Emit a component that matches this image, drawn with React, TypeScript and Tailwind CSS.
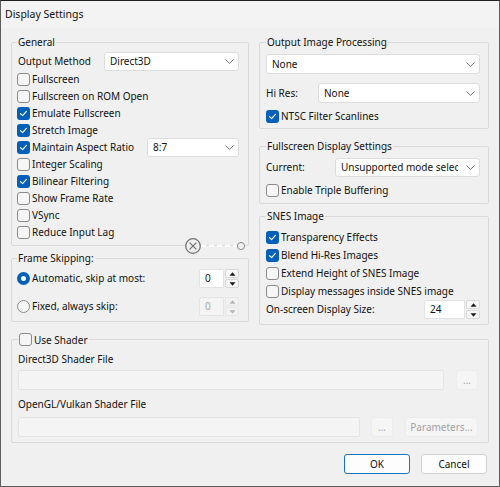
import clsx from 'clsx'
import type { ReactNode } from 'react'

function Box({ checked }: { checked?: boolean }) {
  if (checked)
    return (
      <span className="w-[13px] h-[13px] shrink-0 rounded-[3px] bg-[#005fb8] flex items-center justify-center">
        <svg width="9" height="9" viewBox="0 0 9 9" fill="none">
          <path d="M1.6 4.7 L3.6 6.6 L7.4 2.4" stroke="white" strokeWidth="1.2" strokeLinecap="round" strokeLinejoin="round" />
        </svg>
      </span>
    )
  return <span className="w-[13px] h-[13px] shrink-0 rounded-[3px] border border-[#8a8a8a] bg-[#f6f6f6]" />
}

function Check({ label, checked, className }: { label: string; checked?: boolean; className?: string }) {
  return (
    <div className={clsx('flex items-center gap-[2px]', className ?? 'h-[17px]')}>
      <Box checked={checked} />
      <span className="whitespace-nowrap">{label}</span>
    </div>
  )
}

function Radio({ on, label }: { on?: boolean; label: string }) {
  return (
    <div className="flex items-center gap-[2px]">
      {on ? (
        <span className="w-[13px] h-[13px] rounded-full bg-[#005fb8] flex items-center justify-center">
          <span className="w-[5px] h-[5px] rounded-full bg-white" />
        </span>
      ) : (
        <span className="w-[13px] h-[13px] rounded-full border border-[#8a8a8a] bg-[#f6f6f6]" />
      )}
      <span>{label}</span>
    </div>
  )
}

function Chevron() {
  return (
    <svg width="9" height="5" viewBox="0 0 9 5" fill="none" className="shrink-0">
      <path d="M0.5 0.5 L4.5 4.3 L8.5 0.5" stroke="#6e6e6e" strokeWidth="1" />
    </svg>
  )
}

function Combo({ value, className }: { value: string; className?: string }) {
  return (
    <div className={clsx('h-[19px] flex items-center bg-white border border-[#dcdcdc] rounded-[3px] pl-[5px] pr-[4px]', className)}>
      <span className="flex-1 mr-[8px] overflow-hidden whitespace-nowrap">{value}</span>
      <Chevron />
    </div>
  )
}

function Tri({ up, disabled }: { up?: boolean; disabled?: boolean }) {
  return (
    <span className={clsx('flex-1 flex items-center justify-center rounded-[2px] border', disabled ? 'bg-[#f3f3f3] border-[#e6e6e6]' : 'bg-[#f7f7f7] border-[#d8d8d8]')}>
      <svg width="7" height="4" viewBox="0 0 7 4">
        <path d={up ? 'M0.5 3.8 L3.5 0.3 L6.5 3.8 Z' : 'M0.5 0.2 L3.5 3.7 L6.5 0.2 Z'} fill={disabled ? '#b5b5b5' : '#1a1a1a'} />
      </svg>
    </span>
  )
}

function Spin({ value, disabled, className }: { value: string; disabled?: boolean; className?: string }) {
  return (
    <div className={clsx('h-[19px] flex', className)}>
      <div className={clsx('flex-1 flex items-center pl-[5px] border rounded-l-[2px]', disabled ? 'bg-[#f4f4f4] border-[#e4e4e4] text-[#a6a6a6]' : 'bg-white border-[#e2e2e2]')}>
        {value}
      </div>
      <div className="w-[15px] flex flex-col gap-[1px] pl-[1px]">
        <Tri up disabled={disabled} />
        <Tri disabled={disabled} />
      </div>
    </div>
  )
}

function Group({ title, children, className }: { title: ReactNode; children: ReactNode; className?: string }) {
  return (
    <fieldset className={clsx('relative border border-[#d9d9d9] rounded-[2px]', className)}>
      <legend className="px-[1px] leading-[16px]">{title}</legend>
      {children}
    </fieldset>
  )
}

function Btn({ children, className }: { children: ReactNode; className?: string }) {
  return (
    <div className={clsx('h-[20px] flex items-center justify-center rounded-[3px] border border-[#ececec] bg-[#f5f5f5] text-[#a3a3a3]', className)}>
      {children}
    </div>
  )
}

export default function App() {
  return (
    <div className="w-[500px] h-[487px] bg-[#f0f0f0] border border-[#5c5c5c] border-t-[#1f1f1f] flex flex-col text-[10px] text-[#111] font-['Noto_Sans',sans-serif]">
      <div className="h-[27px] pl-[4px] flex items-center text-[10.5px] bg-[#f3f3f3]">Display Settings</div>

      <div className="px-[10px] flex flex-col">
        <div className="flex gap-[10px] mt-[6px]">
          {/* left column */}
          <div className="w-[238px] flex flex-col gap-[4px]">
            <Group title="General" className="pl-[5px] pr-[9px] pt-[2px] pb-[4px]">
              <div className="h-[19px] flex items-center">
                <span className="pl-[1px]">Output Method</span>
                <Combo value="Direct3D" className="ml-auto w-[135px]" />
              </div>
              <Check label="Fullscreen" />
              <Check label="Fullscreen on ROM Open" />
              <Check label="Emulate Fullscreen" checked />
              <Check label="Stretch Image" checked />
              <div className="h-[17px] flex items-center">
                <Check label="Maintain Aspect Ratio" checked />
                <Combo value="8:7" className="ml-auto w-[92px]" />
              </div>
              <Check label="Integer Scaling" />
              <Check label="Bilinear Filtering" checked />
              <Check label="Show Frame Rate" />
              <Check label="VSync" />
              <Check label="Reduce Input Lag" />
              <svg width="64" height="18" viewBox="0 0 64 18" fill="none" className="absolute left-[172px] bottom-[-10px]">
                <circle cx="9" cy="9" r="7.3" stroke="#737373" strokeWidth="1.3" fill="#f0f0f0" />
                <path d="M5.6 5.6 L12.4 12.4 M12.4 5.6 L5.6 12.4" stroke="#737373" strokeWidth="1.3" />
                <path d="M17 9 L53 9" stroke="#ffffff" strokeWidth="2" strokeDasharray="5 3" />
                <circle cx="57" cy="9" r="3.6" stroke="#8a8a8a" strokeWidth="1" fill="#f0f0f0" />
              </svg>
            </Group>

            <Group title="Frame Skipping:" className="pl-[5px] pr-[9px] pt-[3px] pb-[5px]">
              <div className="h-[19px] flex items-center justify-between">
                <Radio on label="Automatic, skip at most:" />
                <Spin value="0" className="w-[40px]" />
              </div>
              <div className="h-[19px] mt-[9px] flex items-center justify-between">
                <Radio label="Fixed, always skip:" />
                <Spin value="0" disabled className="w-[40px]" />
              </div>
            </Group>
          </div>

          {/* right column */}
          <div className="w-[230px] flex flex-col">
            <Group title="Output Image Processing" className="pl-[6px] pr-[8px] pt-[4px] pb-[3px]">
              <Combo value="None" className="h-[20px]" />
              <div className="h-[20px] mt-[9px] flex items-center">
                <span>Hi Res:</span>
                <Combo value="None" className="ml-auto w-[162px] h-[20px]" />
              </div>
              <Check label="NTSC Filter Scanlines" checked className="h-[17px] mt-[5px]" />
            </Group>

            <Group title="Fullscreen Display Settings" className="mt-[9px] pl-[6px] pr-[8px] pt-[4px] pb-[4px]">
              <div className="h-[19px] flex items-center">
                <span>Current:</span>
                <Combo value="Unsupported mode selected" className="ml-auto w-[145px]" />
              </div>
              <Check label="Enable Triple Buffering" className="h-[17px] mt-[5px]" />
            </Group>

            <Group title="SNES Image" className="mt-[4px] pl-[6px] pr-[8px] pt-[4px] pb-[5px]">
              <Check label="Transparency Effects" checked className="h-[18px]" />
              <Check label="Blend Hi-Res Images" checked className="h-[18px]" />
              <Check label="Extend Height of SNES Image" className="h-[18px]" />
              <Check label="Display messages inside SNES image" className="h-[18px]" />
              <div className="h-[19px] flex items-center">
                <span>On-screen Display Size:</span>
                <Spin value="24" className="ml-auto w-[56px]" />
              </div>
            </Group>
          </div>
        </div>

        <Group title={<Check label="Use Shader" />} className="mt-[6px] pl-[6px] pr-[10px] pt-[3px] pb-[5px]">
          <div className="h-[16px] flex items-center">Direct3D Shader File</div>
          <div className="mt-[3px] flex items-center">
            <div className="flex-1 h-[20px] rounded-[2px] border border-[#e4e4e4] bg-[#f4f4f4]" />
            <Btn className="w-[22px] ml-[12px]">...</Btn>
          </div>
          <div className="h-[16px] mt-[6px] flex items-center">OpenGL/Vulkan Shader File</div>
          <div className="mt-[5px] flex items-center">
            <div className="flex-1 h-[20px] rounded-[2px] border border-[#e4e4e4] bg-[#f4f4f4]" />
            <Btn className="w-[22px] ml-[11px]">...</Btn>
            <Btn className="w-[73px] ml-[12px]">Parameters...</Btn>
          </div>
        </Group>

        <div className="mt-[11px] pr-[2px] flex justify-end gap-[11px]">
          <div className="w-[66px] h-[20px] flex items-center justify-center rounded-[3px] border border-[#1f6fc0] bg-[#fdfdfd]">OK</div>
          <div className="w-[66px] h-[20px] flex items-center justify-center rounded-[3px] border border-[#d0d0d0] bg-[#fdfdfd]">Cancel</div>
        </div>
      </div>
    </div>
  )
}
